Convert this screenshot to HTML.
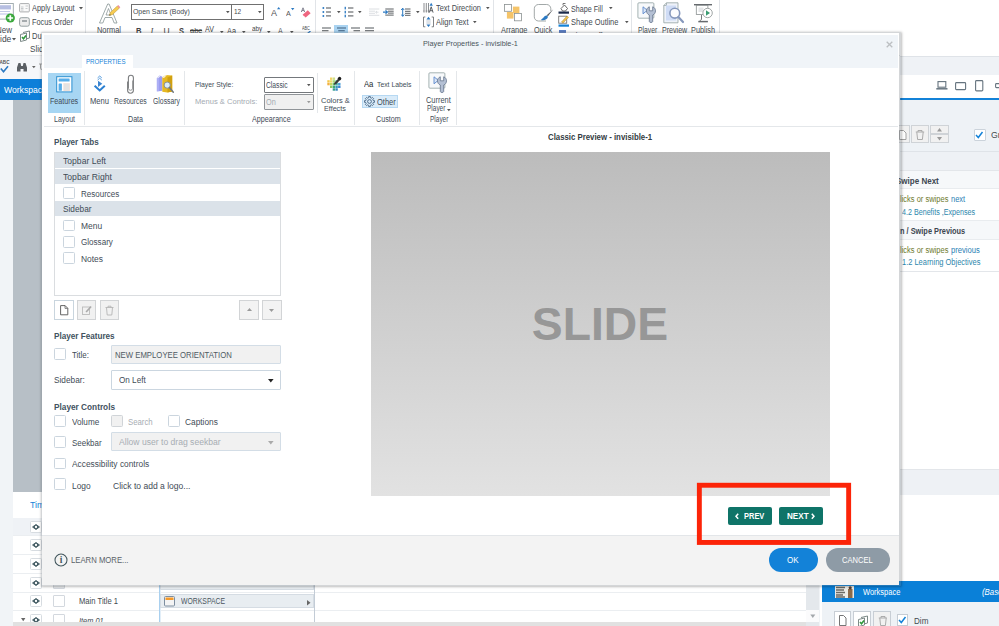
<!DOCTYPE html>
<html><head><meta charset="utf-8"><title>Player Properties</title>
<style>
html,body{margin:0;padding:0;}
body{width:999px;height:626px;overflow:hidden;position:relative;background:#fff;font-family:"Liberation Sans",sans-serif;}
#root{position:absolute;left:0;top:0;width:999px;height:626px;overflow:hidden;}
#root div,#root span,#root svg{position:absolute;box-sizing:border-box;}
.t{white-space:nowrap;line-height:12px;height:12px;}
</style></head><body><div id="root">
<div style="left:0px;top:0px;width:999px;height:56px;background:#fff;"></div>
<div style="left:0px;top:55px;width:900px;height:1px;background:#e3e6ea;"></div>
<div style="left:85px;top:0px;width:1px;height:46px;background:#e1e4e8;"></div>
<div style="left:315px;top:0px;width:1px;height:46px;background:#e1e4e8;"></div>
<div style="left:493px;top:0px;width:1px;height:46px;background:#e1e4e8;"></div>
<div style="left:631px;top:0px;width:1px;height:46px;background:#e1e4e8;"></div>
<div style="left:719px;top:0px;width:1px;height:46px;background:#e1e4e8;"></div>
<svg style="left:-6px;top:0px;" width="24" height="24" viewBox="0 0 24 24"><rect x="0.500" y="3.500" width="18.800" height="15.600" fill="#fff" stroke="#9aa6aa" stroke-width="0.900"/>
<rect x="2" y="5.200" width="15" height="4.200" fill="#b7bfe2"/><rect x="2" y="11" width="14" height="0.800" fill="#b7bfe2"/><rect x="2" y="13" width="14" height="2" fill="#dcdff2"/>
<circle cx="16.300" cy="18" r="4.600" fill="#3aa83c"/><path d="M13.500 18h5.600M16.300 15.200v5.600" stroke="#fff" stroke-width="1.700"/></svg>
<span class="t" style="left:-4px;top:24.0px;font-size:8.6px;color:#444a50;font-weight:400;transform-origin:left center;transform:scaleX(0.93);">New</span>
<span class="t" style="left:-0.5px;top:32.7px;font-size:8.6px;color:#444a50;font-weight:400;transform-origin:left center;transform:scaleX(0.9846);">ide</span>
<svg style="left:12.3px;top:38.2px;" width="4" height="3" viewBox="0 0 4 3"><path d="M0 0h4l-2 2.5z" fill="#555"/></svg>
<svg style="left:19px;top:3px;" width="11" height="10" viewBox="0 0 11 10"><rect x="0.600" y="0.600" width="9.700" height="8.300" rx="0.800" fill="#fafafa" stroke="#a2a4a6" stroke-width="0.900"/><path d="M2 4h2.500M2 5.500h2.500M2 7h2.500M6.500 3h2.500M6.500 5.500h2" stroke="#b0b4b8" stroke-width="0.700"/></svg>
<span class="t" style="left:31.8px;top:2.0px;font-size:8.6px;color:#444a50;font-weight:400;transform-origin:left center;transform:scaleX(0.8587);">Apply Layout</span>
<svg style="left:79px;top:7.2px;" width="4" height="3" viewBox="0 0 4 3"><path d="M0 0h4l-2 2.5z" fill="#555"/></svg>
<svg style="left:19px;top:17px;" width="11" height="10" viewBox="0 0 11 10"><rect x="0.600" y="0.700" width="9.700" height="8.500" rx="1.700" fill="#ededed" stroke="#8b9698" stroke-width="0.900"/><path d="M3 4h5" stroke="#6a7478" stroke-width="1.100"/></svg>
<span class="t" style="left:31.8px;top:16.0px;font-size:8.6px;color:#444a50;font-weight:400;transform-origin:left center;transform:scaleX(0.8558);">Focus Order</span>
<svg style="left:19px;top:30px;" width="12" height="12" viewBox="0 0 12 12"><path d="M1.5 4.5l6-1.5v7l-6 1.5z" fill="#fff" stroke="#7d8a88"/><path d="M4 2.5l6.5-1.5v7l-3 .8" fill="none" stroke="#7d8a88"/><path d="M3 7l1.5 1.8L7 5.5" stroke="#2e9a3a" stroke-width="1.6" fill="none"/></svg>
<span class="t" style="left:31.8px;top:30.0px;font-size:8.6px;color:#444a50;font-weight:400;transform-origin:left center;transform:scaleX(0.8732);">Du</span>
<span class="t" style="left:30px;top:42.5px;font-size:8.6px;color:#444a50;font-weight:400;transform-origin:left center;transform:scaleX(0.9413);">Slid</span>
<svg style="left:98px;top:2px;" width="24" height="23" viewBox="0 0 24 23"><path d="M1.500 21L9.700 2h1.400L19 21h-2.800l-2.200-5.500H7L4.800 21z" fill="#fff" stroke="#7f8d8d" stroke-width="0.750"/>
<path d="M8 13h5l-2.500-6.500z" fill="#fff" stroke="#7f8d8d" stroke-width="0.700"/>
<path d="M11.300 13.500l1-3 7-6.500 2 2.200-7 6.500z" fill="#f6cb52" stroke="#b89536" stroke-width="0.500"/><path d="M19.300 4l1-1 2 2.200-1 1z" fill="#ef8fa0"/><path d="M11.300 13.500l.5-1.500 1 1z" fill="#555"/></svg>
<span class="t" style="left:97.2px;top:24.0px;font-size:8.6px;color:#444a50;font-weight:400;transform-origin:left center;transform:scaleX(0.8659);">Normal</span>
<div style="left:131px;top:4px;width:101px;height:15.5px;background:#fff;border:1px solid #707070;"></div>
<div style="left:231px;top:4px;width:33px;height:15.5px;background:#fff;border:1px solid #707070;"></div>
<span class="t" style="left:132.8px;top:5.8px;font-size:7.9px;color:#444a50;font-weight:400;transform-origin:left center;transform:scaleX(0.8755);">Open Sans (Body)</span>
<span class="t" style="left:234.2px;top:5.8px;font-size:7.9px;color:#444a50;font-weight:400;transform-origin:left center;transform:scaleX(0.8193);">12</span>
<svg style="left:225.5px;top:11px;" width="4" height="3" viewBox="0 0 4 3"><path d="M0 0h3.6l-1.8 2.2z" fill="#555"/></svg>
<svg style="left:258px;top:11px;" width="4" height="3" viewBox="0 0 4 3"><path d="M0 0h3.6l-1.8 2.2z" fill="#555"/></svg>
<span class="t" style="left:270.9px;top:6.6px;font-size:8.6px;color:#555;font-weight:400;transform-origin:left center;transform:scaleX(1.0459);">A</span>
<svg style="left:276.8px;top:7.3px;" width="4" height="3" viewBox="0 0 4 3"><path d="M0 2.300h3.400l-1.700-2.200z" fill="#2b79c2"/></svg>
<span class="t" style="left:285.9px;top:7.5px;font-size:6.8px;color:#555;font-weight:400;transform-origin:left center;transform:scaleX(1.0582);">A</span>
<svg style="left:290.7px;top:7.5px;" width="4" height="3" viewBox="0 0 4 3"><path d="M0 0h3.400l-1.700 2.200z" fill="#2b79c2"/></svg>
<svg style="left:300px;top:6px;" width="12" height="12" viewBox="0 0 12 12"><path d="M2.600 8.800l5.200-4.600 2.800 3-5.200 4.600z" fill="#ef6680"/><path d="M3.700 9.900l2.800 3" stroke="#fff" stroke-width="0.600"/><path d="M1.300 6L3 1.800 4.700 6M2 4.600h2" stroke="#667" fill="none" stroke-width="0.800"/></svg>
<span class="t" style="left:136px;top:24.9px;font-size:8.5px;color:#444;font-weight:700;transform-origin:left center;transform:scaleX(0.896);">B</span>
<span class="t" style="left:150.5px;top:24.9px;font-size:8.5px;color:#444;font-weight:400;font-style:italic;font-family:'Liberation Serif',serif;">I</span>
<span class="t" style="left:163.5px;top:24.9px;font-size:8.5px;color:#444;font-weight:400;text-decoration:underline;">U</span>
<span class="t" style="left:178.5px;top:24.9px;font-size:8.5px;color:#444;font-weight:700;transform-origin:left center;transform:scaleX(0.8819);">S</span>
<span class="t" style="left:190px;top:24.9px;font-size:7.5px;color:#444;font-weight:400;text-decoration:line-through;">abc</span>
<span class="t" style="left:204.8px;top:22.9px;font-size:8.5px;color:#444;font-weight:400;transform-origin:left center;transform:scaleX(0.8404);">AV</span>
<span class="t" style="left:227px;top:24.9px;font-size:8.5px;color:#444;font-weight:400;transform-origin:left center;transform:scaleX(0.8656);">Aa</span>
<span class="t" style="left:251.7px;top:22.9px;font-size:7.5px;color:#444;font-weight:400;transform-origin:left center;transform:scaleX(0.8435);">aby</span>
<span class="t" style="left:277.5px;top:24.9px;font-size:8.5px;color:#444;font-weight:400;transform-origin:left center;transform:scaleX(0.8466);">A</span>
<span class="t" style="left:301.5px;top:21.9px;font-size:5.2px;color:#444;font-weight:400;transform-origin:left center;transform:scaleX(0.7295);">ABC</span>
<svg style="left:307px;top:31px;" width="5" height="3" viewBox="0 0 5 3"><path d="M0.500 2.500l3-2.500" stroke="#2b79c2" stroke-width="1.200"/></svg>
<svg style="left:219.5px;top:30.8px;" width="4" height="3" viewBox="0 0 4 3"><path d="M0 0h3.600l-1.800 2.200z" fill="#555"/></svg>
<svg style="left:241.8px;top:30.8px;" width="4" height="3" viewBox="0 0 4 3"><path d="M0 0h3.600l-1.800 2.200z" fill="#555"/></svg>
<svg style="left:267.2px;top:30.8px;" width="4" height="3" viewBox="0 0 4 3"><path d="M0 0h3.600l-1.800 2.200z" fill="#555"/></svg>
<svg style="left:289.6px;top:30.8px;" width="4" height="3" viewBox="0 0 4 3"><path d="M0 0h3.600l-1.800 2.200z" fill="#555"/></svg>
<svg style="left:322px;top:6px;" width="14" height="12" viewBox="0 0 14 12"><rect x="0.400" y="1.1" width="1.900" height="1.900" rx="0.900" fill="#2b79c2"/><path d="M4 2h5" stroke="#5a5e62" stroke-width="1.100"/><rect x="0.400" y="5.1" width="1.900" height="1.900" rx="0.900" fill="#2b79c2"/><path d="M4 6h5" stroke="#5a5e62" stroke-width="1.100"/><rect x="0.400" y="9.0" width="1.900" height="1.900" rx="0.900" fill="#2b79c2"/><path d="M4 9.9h5" stroke="#5a5e62" stroke-width="1.100"/></svg>
<svg style="left:344px;top:6px;" width="14" height="12" viewBox="0 0 14 12"><rect x="0.600" y="0.8" width="1.300" height="2.600" fill="#2b79c2"/><path d="M4 2h5.400" stroke="#5a5e62" stroke-width="1.100"/><rect x="0.600" y="4.8" width="1.300" height="2.600" fill="#2b79c2"/><path d="M4 6h5.400" stroke="#5a5e62" stroke-width="1.100"/><rect x="0.600" y="8.700000000000001" width="1.300" height="2.600" fill="#2b79c2"/><path d="M4 9.9h5.400" stroke="#5a5e62" stroke-width="1.100"/></svg>
<svg style="left:369px;top:8.2px;" width="14" height="12" viewBox="0 0 14 12"><path d="M0 1h10.3" stroke="#d3d7db" stroke-width="0.800"/><path d="M0 3.2h6" stroke="#d3d7db" stroke-width="0.800"/><path d="M0 5.3h6" stroke="#d3d7db" stroke-width="0.800"/><path d="M0 7.3h10.3" stroke="#d3d7db" stroke-width="0.800"/><path d="M9.500 4.200l-2.500 0M8 3l-1.500 1.200L8 5.500" stroke="#d3d7db" stroke-width="0.800" fill="none"/></svg>
<svg style="left:383px;top:8.2px;" width="14" height="12" viewBox="0 0 14 12"><path d="M2.3 1h8.4" stroke="#5a5e62" stroke-width="1"/><path d="M5 3.2h5.7" stroke="#5a5e62" stroke-width="1"/><path d="M5 5.1h5.7" stroke="#5a5e62" stroke-width="1"/><path d="M2.3 7.1h8.4" stroke="#5a5e62" stroke-width="1"/><path d="M0 4.100h4M2.500 2.300l2 1.800-2 1.800" stroke="#2b79c2" stroke-width="1.100" fill="none"/></svg>
<svg style="left:401.3px;top:8.2px;" width="14" height="12" viewBox="0 0 14 12"><path d="M4 1h5.500" stroke="#5a5e62" stroke-width="1"/><path d="M4 3.3h5.500" stroke="#5a5e62" stroke-width="1"/><path d="M4 5.3h5.500" stroke="#5a5e62" stroke-width="1"/><path d="M4 7.3h5.500" stroke="#5a5e62" stroke-width="1"/><path d="M1.700 0.300v8M0.200 2l1.500-1.800L3.200 2M0.200 6.500l1.500 1.800 1.500-1.800" stroke="#2b79c2" stroke-width="1" fill="none"/></svg>
<svg style="left:336.6px;top:11.2px;" width="4" height="3" viewBox="0 0 4 3"><path d="M0 0h3.600l-1.800 2.200z" fill="#555"/></svg>
<svg style="left:358.3px;top:11.2px;" width="4" height="3" viewBox="0 0 4 3"><path d="M0 0h3.600l-1.800 2.200z" fill="#555"/></svg>
<svg style="left:415.7px;top:11.2px;" width="4" height="3" viewBox="0 0 4 3"><path d="M0 0h3.600l-1.800 2.200z" fill="#555"/></svg>
<div style="left:334.2px;top:24.6px;width:13.8px;height:9px;background:#a9d3f1;"></div>
<svg style="left:322.2px;top:27.3px;" width="10" height="7" viewBox="0 0 10 7"><path d="M0 1.0h9" stroke="#62666a" stroke-width="1.100"/><path d="M0 3.7h6.5" stroke="#62666a" stroke-width="1.100"/></svg>
<svg style="left:336.6px;top:27.3px;" width="10" height="7" viewBox="0 0 10 7"><path d="M0.0 1.0h9" stroke="#4a6a88" stroke-width="1.100"/><path d="M1.25 3.7h6.5" stroke="#4a6a88" stroke-width="1.100"/></svg>
<svg style="left:351px;top:27.3px;" width="10" height="7" viewBox="0 0 10 7"><path d="M0 1.0h9" stroke="#62666a" stroke-width="1.100"/><path d="M2.5 3.7h6.5" stroke="#62666a" stroke-width="1.100"/></svg>
<svg style="left:364.8px;top:27.3px;" width="10" height="7" viewBox="0 0 10 7"><path d="M0 1.0h9" stroke="#62666a" stroke-width="1.100"/><path d="M0 3.7h9" stroke="#62666a" stroke-width="1.100"/></svg>
<svg style="left:423px;top:2px;" width="12" height="12" viewBox="0 0 12 12"><path d="M1 1v9.600M3.300 1v9.600M5.500 1v9.600" stroke="#4e5256" stroke-width="0.650"/><path d="M0.300 9h6" stroke="#4e5256" stroke-width="0.500" stroke-dasharray="0.700 0.700"/><path d="M6.300 10.600l1.900-5.800 1.900 5.800M7 8.700h2.400" stroke="#4a4e52" stroke-width="0.900" fill="none"/><path d="M6.500 3.800l1.700-3 1.700 3z" fill="#2b79c2"/></svg>
<span class="t" style="left:435.7px;top:2.0px;font-size:8.6px;color:#444a50;font-weight:400;transform-origin:left center;transform:scaleX(0.8619);">Text Direction</span>
<svg style="left:485.8px;top:7.2px;" width="4" height="3" viewBox="0 0 4 3"><path d="M0 0h3.6l-1.8 2.2z" fill="#555"/></svg>
<svg style="left:423px;top:16px;" width="12" height="12" viewBox="0 0 12 12"><path d="M2.300 1H0.500v9.800h1.800M8.700 1h1.800v9.800H8.700" stroke="#5e6266" fill="none" stroke-width="0.800"/><rect x="3.300" y="3.800" width="4.400" height="4.200" fill="#dfe3e8"/><path d="M5.500 0.800l2 2.600h-4zM5.500 11l2-2.600h-4z" fill="#2b79c2"/></svg>
<span class="t" style="left:435.7px;top:16.0px;font-size:8.6px;color:#444a50;font-weight:400;transform-origin:left center;transform:scaleX(0.8753);">Align Text</span>
<svg style="left:472.6px;top:21.2px;" width="4" height="3" viewBox="0 0 4 3"><path d="M0 0h3.6l-1.8 2.2z" fill="#555"/></svg>
<svg style="left:503px;top:3px;" width="20" height="19" viewBox="0 0 20 19"><rect x="9.900" y="3.600" width="6.500" height="6.500" fill="#f5c469"/><rect x="3.900" y="9" width="6.600" height="6.600" fill="#f5c469"/><rect x="1.500" y="1.500" width="7" height="6.800" fill="#fff" stroke="#8b9191" stroke-width="0.800"/><rect x="11.400" y="10.500" width="7" height="7.300" fill="#fff" stroke="#8b9191" stroke-width="0.800"/></svg>
<span class="t" style="left:500.8px;top:24.0px;font-size:8.6px;color:#444a50;font-weight:400;transform-origin:left center;transform:scaleX(0.8628);">Arrange</span>
<svg style="left:533px;top:3px;" width="22" height="21" viewBox="0 0 22 21"><path d="M13 18H5.500a4.200 4.200 0 0 1-4.200-4.200V5.700A4.200 4.200 0 0 1 5.500 1.500h8.100a4.200 4.200 0 0 1 4.200 4.200V8" fill="#fff" stroke="#8a9292" stroke-width="0.800"/><path d="M20.300 6.300l-5.300 7-1.300-1z" fill="#5a5e62"/><path d="M13.800 12.600c-2.600-.3-3.300 3-6 4.300 3 1 6.700-.3 7.200-3.200z" fill="#2b79c2"/></svg>
<span class="t" style="left:533.7px;top:24.0px;font-size:8.6px;color:#444a50;font-weight:400;transform-origin:left center;transform:scaleX(0.8325);">Quick</span>
<svg style="left:558px;top:2px;" width="12" height="12" viewBox="0 0 12 12"><path d="M3 6.500l3.500-3.500 3 3.500-2 2.500H4.500z" fill="#fff" stroke="#555" stroke-width="0.9"/><path d="M5 3.200V1.500h2.500" fill="none" stroke="#555" stroke-width="0.8"/><rect x="0.500" y="9.500" width="10.500" height="2.200" fill="#1a2a4a"/></svg>
<span class="t" style="left:571.2px;top:2.6px;font-size:8.6px;color:#444a50;font-weight:400;transform-origin:left center;transform:scaleX(0.8315);">Shape Fill</span>
<svg style="left:608.5px;top:7px;" width="4" height="3" viewBox="0 0 4 3"><path d="M0 0h3.6l-1.8 2.2z" fill="#555"/></svg>
<svg style="left:558px;top:15px;" width="12" height="12" viewBox="0 0 12 12"><rect x="0.700" y="1.200" width="8" height="7" fill="#fff" stroke="#777" stroke-width="0.9"/><path d="M3.500 7l5.500-6 1.500 1.300L5 8z" fill="#f2c34e" stroke="#a98425" stroke-width="0.500"/><rect x="0.500" y="9.500" width="10.500" height="2.200" fill="#1382d8"/></svg>
<span class="t" style="left:571.2px;top:15.8px;font-size:8.6px;color:#444a50;font-weight:400;transform-origin:left center;transform:scaleX(0.8696);">Shape Outline</span>
<svg style="left:624.5px;top:21px;" width="4" height="3" viewBox="0 0 4 3"><path d="M0 0h3.6l-1.8 2.2z" fill="#555"/></svg>
<div style="left:559px;top:29.5px;width:7px;height:3px;background:#5d7fc4;"></div>
<span class="t" style="left:571.2px;top:29.5px;font-size:8.6px;color:#444a50;font-weight:400;transform-origin:left center;transform:scaleX(0.8311);">Shape Effect</span>
<svg style="left:637px;top:1.8px;" width="22" height="22" viewBox="0 0 22 22"><rect x="0.900" y="0.800" width="16" height="15.400" rx="1" fill="#f7f9fb" stroke="#8fa0a0" stroke-width="0.800"/><path d="M6 4.800l4.300 3.500L6 11.800z" fill="#dbe6f6" stroke="#5b88cc" stroke-width="0.900"/><path d="M12.300 4.800v4h3.400v-4c1.900.8 2.800 2.300 2.800 4 0 2-1.100 3.500-2.800 4.200v6.500c0 1.300-3.400 1.300-3.400 0v-6.500c-1.700-.7-2.800-2.200-2.800-4.200 0-1.700.9-3.200 2.800-4z" fill="#b4c0d4" stroke="#64748c" stroke-width="0.800"/></svg>
<span class="t" style="left:637.8px;top:24.0px;font-size:8.6px;color:#444a50;font-weight:400;transform-origin:left center;transform:scaleX(0.7876);">Player</span>
<svg style="left:663px;top:2px;" width="22" height="22" viewBox="0 0 22 22"><path d="M3.500 0.800H15v20H0.800V3.500z" fill="#eef2f9" stroke="#93a2a2" stroke-width="0.800"/><path d="M3.500 0.800V3.500H0.800" fill="none" stroke="#93a2a2" stroke-width="0.700"/><rect x="3" y="3.500" width="10" height="15" fill="#cfdcf5"/><circle cx="11.800" cy="11.200" r="4.900" fill="#fbfcfe" stroke="#8698bc" stroke-width="1.600"/><path d="M15.400 15l4.600 5" stroke="#8698bc" stroke-width="2.200" stroke-linecap="round"/></svg>
<span class="t" style="left:661.8px;top:24.0px;font-size:8.6px;color:#444a50;font-weight:400;transform-origin:left center;transform:scaleX(0.8238);">Preview</span>
<svg style="left:693px;top:2px;" width="22" height="22" viewBox="0 0 22 22"><rect x="1" y="2" width="18" height="1.400" fill="#666a6e"/><rect x="3.300" y="3.400" width="11.600" height="9" fill="#fff" stroke="#8a9090" stroke-width="0.800"/><rect x="5.500" y="5.500" width="5" height="4.500" fill="#e4e6e8"/><path d="M8.500 13v4.500l-2 1.500" stroke="#666a6e" stroke-width="0.900" fill="none"/><path d="M5.300 19.600h9.600" stroke="#666a6e" stroke-width="1.500"/><circle cx="14.600" cy="11" r="4.700" fill="#fff" stroke="#8a9090" stroke-width="0.800"/><path d="M13 8.300l4 2.700-4 2.700z" fill="#3a9c72"/></svg>
<span class="t" style="left:691.4px;top:24.0px;font-size:8.6px;color:#444a50;font-weight:400;transform-origin:left center;transform:scaleX(0.8508);">Publish</span>
<div style="left:0px;top:56px;width:60px;height:23px;background:#f5f7fa;"></div>
<span class="t" style="left:-0.5px;top:57.0px;font-size:4.6px;color:#555;font-weight:700;">ABC</span>
<svg style="left:0px;top:64.5px;" width="10" height="8" viewBox="0 0 10 8"><path d="M0.800 3.500l2.700 3.200L8 1.300" stroke="#2b79c2" stroke-width="1.600" fill="none"/></svg>
<svg style="left:15.5px;top:61.5px;" width="12" height="11" viewBox="0 0 12 11"><path d="M1 9.500V5.500l1.500-4.500h2l.7 3h1.600l.7-3h2l1.500 4.500v4H7.500V7H4.500v2.500z" fill="#5a5f64"/></svg>
<svg style="left:31.5px;top:65.5px;" width="5" height="3" viewBox="0 0 5 3"><path d="M0 0h3.600l-1.800 2.300z" fill="#666"/></svg>
<svg style="left:39px;top:63px;" width="4" height="8" viewBox="0 0 4 8"><path d="M0 1h3M1.500 1v4l1 2" stroke="#999" stroke-width="0.900" fill="none"/></svg>
<div style="left:0px;top:79px;width:60px;height:21px;background:#0d7fd9;"></div>
<span class="t" style="left:3.6px;top:83.6px;font-size:8.8px;color:#fff;font-weight:400;transform-origin:left center;transform:scaleX(0.9782);">Workspace</span>
<div style="left:0px;top:100px;width:13px;height:526px;background:#f1f4f7;"></div>
<div style="left:13px;top:100px;width:40px;height:392px;background:#b7bfc6;"></div>
<div style="left:13px;top:492px;width:800px;height:134px;background:#fff;"></div>
<span class="t" style="left:30.3px;top:499.3px;font-size:8.8px;color:#1382d8;font-weight:400;transform-origin:left center;transform:scaleX(1.0082);">Timeline</span>
<div style="left:13px;top:518px;width:800px;height:17px;background:#eff2f6;"></div>
<div style="left:13px;top:535px;width:800px;height:1px;background:#ebeef1;"></div>
<div style="left:13px;top:554.3px;width:800px;height:1px;background:#ebeef1;"></div>
<div style="left:13px;top:573.3px;width:800px;height:1px;background:#ebeef1;"></div>
<div style="left:13px;top:592px;width:800px;height:1px;background:#ebeef1;"></div>
<div style="left:13px;top:610.3px;width:800px;height:1px;background:#ebeef1;"></div>
<svg style="left:30px;top:520.5px;" width="12" height="12" viewBox="0 0 12 12"><rect x="0.500" y="0.500" width="11" height="11" rx="1" fill="#fff" stroke="#d3d8de" stroke-width="0.900"/><path d="M2.500 6L6 3.400 9.500 6 6 8.600z" fill="#3f5860" stroke="#3f5860" stroke-width="0.800" stroke-linejoin="round"/><circle cx="6" cy="6" r="1.150" fill="#fff"/></svg>
<svg style="left:30px;top:539px;" width="12" height="12" viewBox="0 0 12 12"><rect x="0.500" y="0.500" width="11" height="11" rx="1" fill="#fff" stroke="#d3d8de" stroke-width="0.900"/><path d="M2.500 6L6 3.400 9.500 6 6 8.600z" fill="#3f5860" stroke="#3f5860" stroke-width="0.800" stroke-linejoin="round"/><circle cx="6" cy="6" r="1.150" fill="#fff"/></svg>
<svg style="left:30px;top:558px;" width="12" height="12" viewBox="0 0 12 12"><rect x="0.500" y="0.500" width="11" height="11" rx="1" fill="#fff" stroke="#d3d8de" stroke-width="0.900"/><path d="M2.500 6L6 3.400 9.500 6 6 8.600z" fill="#3f5860" stroke="#3f5860" stroke-width="0.800" stroke-linejoin="round"/><circle cx="6" cy="6" r="1.150" fill="#fff"/></svg>
<svg style="left:30px;top:577px;" width="12" height="12" viewBox="0 0 12 12"><rect x="0.500" y="0.500" width="11" height="11" rx="1" fill="#fff" stroke="#d3d8de" stroke-width="0.900"/><path d="M2.500 6L6 3.400 9.500 6 6 8.600z" fill="#3f5860" stroke="#3f5860" stroke-width="0.800" stroke-linejoin="round"/><circle cx="6" cy="6" r="1.150" fill="#fff"/></svg>
<svg style="left:30px;top:595.3px;" width="12" height="12" viewBox="0 0 12 12"><rect x="0.500" y="0.500" width="11" height="11" rx="1" fill="#fff" stroke="#d3d8de" stroke-width="0.900"/><path d="M2.500 6L6 3.400 9.500 6 6 8.600z" fill="#3f5860" stroke="#3f5860" stroke-width="0.800" stroke-linejoin="round"/><circle cx="6" cy="6" r="1.150" fill="#fff"/></svg>
<svg style="left:30px;top:614px;" width="12" height="12" viewBox="0 0 12 12"><rect x="0.500" y="0.500" width="11" height="11" rx="1" fill="#fff" stroke="#d3d8de" stroke-width="0.900"/><path d="M2.500 6L6 3.400 9.500 6 6 8.600z" fill="#3f5860" stroke="#3f5860" stroke-width="0.800" stroke-linejoin="round"/><circle cx="6" cy="6" r="1.150" fill="#fff"/></svg>
<div style="left:53px;top:577px;width:11.6px;height:11.6px;background:#e6e9ec;border:1px solid #d3d8de;border-radius:1px;"></div>
<div style="left:53px;top:595.3px;width:11.6px;height:11.6px;background:#fff;border:1px solid #d3d8de;border-radius:1px;"></div>
<div style="left:53px;top:614px;width:11.6px;height:11.6px;background:#fff;border:1px solid #d3d8de;border-radius:1px;"></div>
<span class="t" style="left:79px;top:595.4px;font-size:8.3px;color:#444a50;font-weight:400;transform-origin:left center;transform:scaleX(0.9189);">Main Title 1</span>
<span class="t" style="left:79px;top:614.5px;font-size:8.3px;color:#444a50;font-weight:400;transform-origin:left center;transform:scaleX(0.8887);font-style:italic;">Item 01</span>
<svg style="left:21px;top:618px;" width="5" height="4" viewBox="0 0 5 4"><path d="M0 0h4.400l-2.200 3.200z" fill="#666"/></svg>
<div style="left:159px;top:535px;width:1px;height:91px;background:#a9d0ef;"></div>
<div style="left:160px;top:535px;width:1px;height:91px;background:#e2eef8;"></div>
<div style="left:314px;top:535px;width:1px;height:91px;background:#c3ccd6;"></div>
<div style="left:160px;top:574px;width:153.5px;height:15.5px;background:#e8edf1;border:1px solid #d5dce3;"></div>
<div style="left:160px;top:594.3px;width:153.5px;height:14.2px;background:#e8edf1;border:1px solid #d5dce3;"></div>
<svg style="left:164px;top:596px;" width="11" height="11" viewBox="0 0 11 11"><rect x="0.500" y="0.500" width="10" height="9.500" rx="1" fill="#f4f4f4" stroke="#7d8ea0"/><rect x="1.500" y="1.500" width="8" height="2.500" fill="#f59a2a"/></svg>
<span class="t" style="left:181px;top:595.2px;font-size:8.3px;color:#4a5660;font-weight:400;transform-origin:left center;transform:scaleX(0.8267);">WORKSPACE</span>
<svg style="left:307px;top:599.5px;" width="4" height="6" viewBox="0 0 4 6"><path d="M0 0l3.500 2.700L0 5.400z" fill="#666"/></svg>
<div style="left:805.5px;top:535px;width:13px;height:91px;background:#e4e8ec;"></div>
<div style="left:805.5px;top:610px;width:13px;height:11.5px;background:#fbfbfc;"></div>
<svg style="left:809.5px;top:613.5px;" width="6" height="5" viewBox="0 0 6 5"><path d="M0.300 0.500h5l-2.500 3.600z" fill="#a4a8ac"/></svg>
<div style="left:818.5px;top:495px;width:3.5px;height:131px;background:#f0f3f6;"></div>
<div style="left:13px;top:622.3px;width:793px;height:4px;background:#e1e1e1;"></div>
<div style="left:820px;top:56px;width:179px;height:570px;background:#fff;"></div>
<div style="left:900px;top:56px;width:99px;height:1px;background:#dfe3e8;"></div>
<div style="left:900px;top:57px;width:99px;height:18px;background:#eff2f6;"></div>
<div style="left:900px;top:75px;width:99px;height:23px;background:#fff;"></div>
<div style="left:900px;top:98px;width:99px;height:2px;background:#1382d8;"></div>
<div style="left:900px;top:100px;width:99px;height:51px;background:#eef2f6;"></div>
<svg style="left:935.5px;top:81.3px;" width="13" height="10" viewBox="0 0 13 10"><rect x="2" y="0.600" width="7.800" height="5.600" fill="none" stroke="#66747f" stroke-width="1.100"/><path d="M0.300 7.800h11.200" stroke="#66747f" stroke-width="1.500"/></svg>
<svg style="left:955.3px;top:81.5px;" width="12" height="10" viewBox="0 0 12 10"><rect x="0.600" y="0.600" width="10" height="7" rx="0.800" fill="none" stroke="#66747f" stroke-width="1.100"/></svg>
<svg style="left:975.3px;top:79.8px;" width="10" height="13" viewBox="0 0 10 13"><rect x="0.600" y="0.600" width="7.200" height="10.300" rx="0.900" fill="none" stroke="#66747f" stroke-width="1.100"/></svg>
<svg style="left:994.5px;top:82.5px;" width="8" height="6" viewBox="0 0 8 6"><rect x="0.600" y="0.600" width="8" height="4" rx="0.800" fill="none" stroke="#66747f" stroke-width="1.100"/></svg>
<div style="left:893px;top:125.3px;width:17px;height:18px;background:#f1f1f1;border:1px solid #cfd3d7;"></div>
<div style="left:911.2px;top:125.3px;width:17.6px;height:18px;background:#f1f1f1;border:1px solid #cfd3d7;"></div>
<div style="left:930.3px;top:125.3px;width:18.6px;height:9.2px;background:#f1f1f1;border:1px solid #cfd3d7;"></div>
<div style="left:930.3px;top:134.3px;width:18.6px;height:9px;background:#f1f1f1;border:1px solid #cfd3d7;"></div>
<svg style="left:898.5px;top:129.5px;" width="8" height="10" viewBox="0 0 8 10"><path d="M0.500 0.500h4l2.500 2.500v6.500h-6.500z" fill="#fff" stroke="#999" stroke-width="0.900"/></svg>
<svg style="left:915.2px;top:128.8px;" width="10" height="12" viewBox="0 0 10 12"><path d="M0.800 3h8.400M3 3V1.500h4V3M1.800 3.200l.8 7.300h4.800l.8-7.300" fill="none" stroke="#a4a4a4" stroke-width="0.900"/></svg>
<svg style="left:937.2px;top:128px;" width="5" height="4" viewBox="0 0 5 4"><path d="M0 3.500h5L2.500 0z" fill="#9a9a9a"/></svg>
<svg style="left:937.2px;top:137.3px;" width="5" height="4" viewBox="0 0 5 4"><path d="M0 0h5L2.500 3.500z" fill="#9a9a9a"/></svg>
<div style="left:973.6px;top:128.5px;width:12px;height:12px;background:#fff;border:1px solid #cbd3db;border-radius:1px;"></div>
<svg style="left:975.3px;top:130.6px;" width="9" height="8" viewBox="0 0 9 8"><path d="M1 4l2.300 2.500L7.500 1" stroke="#1382d8" stroke-width="1.500" fill="none"/></svg>
<span class="t" style="left:990.8px;top:129.0px;font-size:8.4px;color:#444a50;font-weight:400;transform-origin:left center;transform:scaleX(1.0395);">Gr</span>
<div style="left:900px;top:151px;width:99px;height:1px;background:#dfe3e8;"></div>
<div style="left:900px;top:152px;width:99px;height:18px;background:#eef1f5;"></div>
<div style="left:900px;top:170px;width:99px;height:1px;background:#e3e6ea;"></div>
<div style="left:900px;top:171px;width:99px;height:17px;background:#f6f8fa;"></div>
<div style="left:900px;top:188px;width:99px;height:1px;background:#e9ecef;"></div>
<div style="left:900px;top:220px;width:99px;height:1px;background:#e9ecef;"></div>
<div style="left:900px;top:221px;width:99px;height:18px;background:#f6f8fa;"></div>
<div style="left:900px;top:239px;width:99px;height:1px;background:#e9ecef;"></div>
<div style="left:900px;top:271px;width:99px;height:1px;background:#e3e6ea;"></div>
<span class="t" style="left:896px;top:174.8px;font-size:8.4px;color:#3c4650;font-weight:700;transform-origin:left center;transform:scaleX(0.9573);">Swipe Next</span>
<span class="t" style="left:899.9px;top:192.7px;font-size:8.3px;color:#6d7a2c;font-weight:400;transform-origin:left center;transform:scaleX(0.9047);">licks or swipes</span>
<span class="t" style="left:950.9px;top:192.7px;font-size:8.3px;color:#2a80b4;font-weight:400;transform-origin:left center;transform:scaleX(0.8988);">next</span>
<span class="t" style="left:902.4px;top:205.9px;font-size:8.3px;color:#2c86ac;font-weight:400;transform-origin:left center;transform:scaleX(0.861);">4.2 Benefits ,Expenses</span>
<span class="t" style="left:899.9px;top:225.3px;font-size:8.4px;color:#3c4650;font-weight:700;transform-origin:left center;transform:scaleX(0.8811);">n / Swipe Previous</span>
<span class="t" style="left:899.9px;top:243.7px;font-size:8.3px;color:#6d7a2c;font-weight:400;transform-origin:left center;transform:scaleX(0.9047);">licks or swipes</span>
<span class="t" style="left:950.9px;top:243.7px;font-size:8.3px;color:#2a80b4;font-weight:400;transform-origin:left center;transform:scaleX(0.918);">previous</span>
<span class="t" style="left:902.4px;top:256.2px;font-size:8.3px;color:#2c86ac;font-weight:400;transform-origin:left center;transform:scaleX(0.899);">1.2 Learning Objectives</span>
<div style="left:900px;top:469px;width:99px;height:1px;background:#e3e6ea;"></div>
<div style="left:900px;top:470px;width:99px;height:25px;background:#eef1f5;"></div>
<div style="left:822px;top:581px;width:177px;height:20.8px;background:#0a80d8;"></div>
<svg style="left:834.5px;top:586px;" width="19" height="12" viewBox="0 0 19 12"><rect x="0" y="0" width="19" height="12" fill="#ecebe6"/><path d="M1 1.500h9M1 4h8M1 6.500h9M1 9h7M1 11h9" stroke="#6a6a64" stroke-width="1.300"/><rect x="13" y="3" width="4.500" height="9" fill="#8a6a4a"/><circle cx="15.200" cy="1.800" r="1.600" fill="#5a4030"/></svg>
<span class="t" style="left:862.8px;top:585.7px;font-size:8.5px;color:#fff;font-weight:400;transform-origin:left center;transform:scaleX(0.8806);">Workspace</span>
<span class="t" style="left:981.6px;top:586.0px;font-size:8.5px;color:#fff;font-weight:400;transform-origin:left center;transform:scaleX(0.9187);font-style:italic;">(Base</span>
<div style="left:822px;top:602px;width:177px;height:24px;background:#eef2f6;"></div>
<div style="left:833.7px;top:610.8px;width:17px;height:18px;background:#fff;border:1px solid #c8ced5;"></div>
<div style="left:853.3px;top:610.8px;width:17.3px;height:18px;background:#fff;border:1px solid #c8ced5;"></div>
<div style="left:873px;top:610.8px;width:17.5px;height:18px;background:#f1f1f1;border:1px solid #c8ced5;"></div>
<svg style="left:838.5px;top:615px;" width="8" height="11" viewBox="0 0 8 11"><path d="M0.500 0.500h4l2.500 2.500v7.500h-6.500z" fill="#fff" stroke="#666" stroke-width="0.900"/></svg>
<svg style="left:856.5px;top:614.5px;" width="12" height="12" viewBox="0 0 12 12"><path d="M1.500 4.500l6-1.500v7l-6 1.500z" fill="#fff" stroke="#7d8a88"/><path d="M4 2.500l6.500-1.500v7l-3 .8" fill="none" stroke="#7d8a88"/><path d="M3 7l1.500 1.800L7 5.500" stroke="#2e9a3a" stroke-width="1.600" fill="none"/></svg>
<svg style="left:877.5px;top:615px;" width="9" height="11" viewBox="0 0 9 11"><path d="M0.800 3h8.400M3 3V1.500h4V3M1.800 3.200l.8 7.300h4.800l.8-7.300" fill="none" stroke="#a4a4a4" stroke-width="0.900"/></svg>
<div style="left:896.6px;top:614px;width:11.8px;height:11.8px;background:#fff;border:1px solid #c5ccd4;"></div>
<svg style="left:898.3px;top:616px;" width="9" height="8" viewBox="0 0 9 8"><path d="M1 4l2.300 2.500L7.500 1" stroke="#1382d8" stroke-width="1.500" fill="none"/></svg>
<span class="t" style="left:913.7px;top:615.2px;font-size:8.3px;color:#444a50;font-weight:400;transform-origin:left center;transform:scaleX(0.9761);">Dim</span>
<div style="left:40.700px;top:32px;width:860px;height:554.200px;background:rgba(96,104,112,0.270);border-radius:1px;box-shadow:0.800px 0.800px 2.500px 0 rgba(0,0,0,0.260);"></div>
<div style="left:41.900px;top:33.400px;width:857.500px;height:551.600px;background:#fff;"></div>
<div style="left:43.5px;top:35.2px;width:854.6px;height:33.3px;background:#f0f4f8;"></div>
<span class="t" style="left:422.5px;top:38.3px;font-size:7.9px;color:#4a545c;font-weight:400;transform-origin:left center;transform:scaleX(0.9246);">Player Properties - invisible-1</span>
<svg style="left:885.8px;top:41.2px;" width="8" height="8" viewBox="0 0 8 8"><path d="M0.700 0.700l5.600 5.600M6.300 0.700l-5.600 5.600" stroke="#bcbfc2" stroke-width="1.300"/></svg>
<div style="left:82px;top:55px;width:51px;height:14.5px;background:#fff;"></div>
<span class="t" style="left:86.3px;top:55.5px;font-size:7.8px;color:#1382d8;font-weight:400;transform-origin:left center;transform:scaleX(0.7878);">PROPERTIES</span>
<div style="left:42px;top:68.5px;width:857.4px;height:57.5px;background:#fff;"></div>
<div style="left:43.5px;top:126px;width:854.6px;height:1px;background:#e4e7ea;"></div>
<div style="left:84px;top:71px;width:1px;height:54px;background:#e4e7ea;"></div>
<div style="left:184px;top:71px;width:1px;height:54px;background:#e4e7ea;"></div>
<div style="left:354px;top:71px;width:1px;height:54px;background:#e4e7ea;"></div>
<div style="left:419px;top:71px;width:1px;height:54px;background:#e4e7ea;"></div>
<div style="left:456px;top:71px;width:1px;height:54px;background:#e4e7ea;"></div>
<div style="left:317px;top:73px;width:1px;height:40px;background:#e4e7ea;"></div>
<div style="left:48px;top:72.5px;width:33px;height:40.5px;background:#a7d6f3;"></div>
<svg style="left:56px;top:76px;" width="17" height="17" viewBox="0 0 17 17"><rect x="0.700" y="0.700" width="15.200" height="15.200" fill="#fff" stroke="#2b8fd0" stroke-width="1"/><rect x="2.600" y="2.400" width="11" height="3.200" rx="0.500" fill="#56aeea"/><rect x="2.600" y="7.600" width="3.300" height="7.200" rx="0.500" fill="#56aeea"/><rect x="7.800" y="7.600" width="5.800" height="7.200" fill="#e3e3e3" stroke="#f0d8cc" stroke-width="0.500"/></svg>
<span class="t" style="left:49.8px;top:95.0px;font-size:8.3px;color:#3f4c57;font-weight:400;transform-origin:left center;transform:scaleX(0.8609);">Features</span>
<span class="t" style="left:53.7px;top:112.9px;font-size:8.3px;color:#3f4c57;font-weight:400;transform-origin:left center;transform:scaleX(0.8427);">Layout</span>
<svg style="left:92px;top:74px;" width="15" height="18" viewBox="0 0 15 18"><path d="M5.600 3.900l2.100-1.900 2.100 1.900M5.600 6.100l2.100-1.900 2.100 1.900" fill="none" stroke="#5a9fe0" stroke-width="1"/><path d="M6 6.800l4.300 3-4.300 3.200z" fill="#3d86d0"/><path d="M2.600 11.700l5.100 4.800 5.100-4.800" fill="none" stroke="#2b80d2" stroke-width="2"/></svg>
<span class="t" style="left:90px;top:95.0px;font-size:8.3px;color:#3f4c57;font-weight:400;transform-origin:left center;transform:scaleX(0.9199);">Menu</span>
<svg style="left:126px;top:74px;" width="10" height="21" viewBox="0 0 10 21"><path d="M1.600 7.500v8.800a2.900 2.900 0 0 0 5.800 0V3.700a2.500 2.500 0 0 0-5 0v10.500" fill="none" stroke="#7c7e80" stroke-width="1.100"/><path d="M2.400 14.200a2 2 0 0 0 4.200 0V6.500" fill="none" stroke="#8c8e90" stroke-width="0.900"/></svg>
<span class="t" style="left:114.4px;top:95.0px;font-size:8.3px;color:#3f4c57;font-weight:400;transform-origin:left center;transform:scaleX(0.8242);">Resources</span>
<svg style="left:156px;top:74px;" width="19" height="20" viewBox="0 0 19 20"><path d="M0.800 4l2.800-2.600 2.800 1.300v14L0.800 17.500z" fill="#9b9df0"/><path d="M0.800 4l2.800-2.600 1 .5L2 4.600z" fill="#e8e8fa"/><path d="M2 4.600v12.600" stroke="#c2c4fa" stroke-width="0.900"/><path d="M6.300 3.500l3.500-2.500 6.400.5v16l-5 1-4.900-.8z" fill="#e6b822"/><path d="M6.300 3.500l3.500-2.500 1 .2L8 4z" fill="#fbf3d8"/><path d="M11.500 3.500l4.700-2v16l-4.700 1z" fill="#d0a010"/><circle cx="11.200" cy="11.100" r="3.100" fill="#dcecf8" stroke="#7e8890" stroke-width="0.900"/><path d="M13.500 13.600l3.800 4.600" stroke="#70787e" stroke-width="1.500" stroke-linecap="round"/></svg>
<span class="t" style="left:152.7px;top:95.0px;font-size:8.3px;color:#3f4c57;font-weight:400;transform-origin:left center;transform:scaleX(0.8245);">Glossary</span>
<span class="t" style="left:127.9px;top:112.9px;font-size:8.3px;color:#3f4c57;font-weight:400;transform-origin:left center;transform:scaleX(0.8556);">Data</span>
<span class="t" style="left:194.5px;top:79.0px;font-size:8px;color:#3f4c57;font-weight:400;transform-origin:left center;transform:scaleX(0.8529);">Player Style:</span>
<span class="t" style="left:194.5px;top:95.8px;font-size:8px;color:#a4abb2;font-weight:400;transform-origin:left center;transform:scaleX(0.9467);">Menus &amp; Controls:</span>
<div style="left:264px;top:77px;width:50px;height:15.5px;background:#fff;border:1px solid #74787c;border-radius:1px;"></div>
<span class="t" style="left:266.2px;top:79.0px;font-size:8.4px;color:#3f4c57;font-weight:400;transform-origin:left center;transform:scaleX(0.8053);">Classic</span>
<svg style="left:307.4px;top:84px;" width="4" height="3" viewBox="0 0 4 3"><path d="M0 0h3.600l-1.800 2.200z" fill="#555"/></svg>
<div style="left:264px;top:94px;width:50px;height:15.5px;background:#f0f0f0;border:1px solid #909498;border-radius:1px;"></div>
<span class="t" style="left:266.2px;top:95.8px;font-size:8.4px;color:#a4abb2;font-weight:400;transform-origin:left center;transform:scaleX(0.8746);">On</span>
<svg style="left:307.4px;top:100.8px;" width="4" height="3" viewBox="0 0 4 3"><path d="M0 0h3.600l-1.800 2.200z" fill="#999"/></svg>
<span class="t" style="left:251.6px;top:112.9px;font-size:8.3px;color:#3f4c57;font-weight:400;transform-origin:left center;transform:scaleX(0.8645);">Appearance</span>
<svg style="left:327px;top:75.5px;" width="15" height="16" viewBox="0 0 15 16"><rect x="3.00" y="1.50" width="2.400" height="2.400" fill="#f2d468"/><rect x="5.70" y="1.50" width="2.400" height="2.400" fill="#cfe08a"/><rect x="0.30" y="4.20" width="2.400" height="2.400" fill="#f6c84a"/><rect x="3.00" y="4.20" width="2.400" height="2.400" fill="#f0dc6a"/><rect x="5.70" y="4.20" width="2.400" height="2.400" fill="#a8d87a"/><rect x="8.40" y="4.20" width="2.400" height="2.400" fill="#6cc8a0"/><rect x="0.30" y="6.90" width="2.400" height="2.400" fill="#f2b040"/><rect x="3.00" y="6.90" width="2.400" height="2.400" fill="#c8d860"/><rect x="5.70" y="6.90" width="2.400" height="2.400" fill="#6cc070"/><rect x="8.40" y="6.90" width="2.400" height="2.400" fill="#48b8a8"/><rect x="11.10" y="6.90" width="2.400" height="2.400" fill="#48a0d8"/><rect x="3.00" y="9.60" width="2.400" height="2.400" fill="#8cc860"/><rect x="5.70" y="9.60" width="2.400" height="2.400" fill="#40a878"/><rect x="8.40" y="9.60" width="2.400" height="2.400" fill="#3898b8"/><rect x="11.10" y="9.60" width="2.400" height="2.400" fill="#3c84d0"/><rect x="5.70" y="12.30" width="2.400" height="2.400" fill="#38a090"/><rect x="8.40" y="12.30" width="2.400" height="2.400" fill="#3488c0"/><path d="M6.800 8.800l0.600-2 4.200-4.500 1.700 1.500-4.200 4.500z" fill="#3a3a3a"/><path d="M11.300 1.500a1.600 1.600 0 0 1 2.600 2.200l-1 .9-2.400-2.200z" fill="#1e1e1e"/></svg>
<span class="t" style="left:320.7px;top:95.3px;font-size:7.7px;color:#3f4c57;font-weight:400;transform-origin:left center;transform:scaleX(0.9754);">Colors &amp;</span>
<span class="t" style="left:324px;top:103.3px;font-size:7.7px;color:#3f4c57;font-weight:400;transform-origin:left center;transform:scaleX(0.9317);">Effects</span>
<span class="t" style="left:364.2px;top:78.2px;font-size:9.6px;color:#24282c;font-weight:400;transform-origin:left center;transform:scaleX(0.8005);">Aa</span>
<span class="t" style="left:376.6px;top:79.0px;font-size:8px;color:#3f4c57;font-weight:400;transform-origin:left center;transform:scaleX(0.8525);">Text Labels</span>
<div style="left:362px;top:95.3px;width:36px;height:12.7px;background:#d9ebf9;border:1px solid #b6d8f2;"></div>
<svg style="left:363.5px;top:95.7px;" width="11" height="11" viewBox="0 0 11 11"><path d="M10.43 4.64L10.43 6.36L9.29 6.41L8.83 7.54L9.59 8.38L8.38 9.59L7.54 8.83L6.41 9.29L6.36 10.43L4.64 10.43L4.59 9.29L3.46 8.83L2.62 9.59L1.41 8.38L2.17 7.54L1.71 6.41L0.57 6.36L0.57 4.64L1.71 4.59L2.17 3.46L1.41 2.62L2.62 1.41L3.46 2.17L4.59 1.71L4.64 0.57L6.36 0.57L6.41 1.71L7.54 2.17L8.38 1.41L9.59 2.62L8.83 3.46L9.29 4.59z" fill="none" stroke="#3d5c7c" stroke-width="0.850" stroke-linejoin="round"/><circle cx="5.500" cy="5.500" r="1.900" fill="none" stroke="#3d5c7c" stroke-width="0.850"/></svg>
<span class="t" style="left:376.6px;top:95.8px;font-size:8.3px;color:#3f4c57;font-weight:400;transform-origin:left center;transform:scaleX(0.9008);">Other</span>
<span class="t" style="left:375.8px;top:112.9px;font-size:8.3px;color:#3f4c57;font-weight:400;transform-origin:left center;transform:scaleX(0.8672);">Custom</span>
<svg style="left:428px;top:72px;" width="22" height="22" viewBox="0 0 22 22"><rect x="0.900" y="0.800" width="16" height="15.400" rx="1" fill="#f7f9fb" stroke="#8fa0a0" stroke-width="0.800"/><path d="M6 4.800l4.300 3.500L6 11.800z" fill="#dbe6f6" stroke="#5b88cc" stroke-width="0.900"/><path d="M12.300 4.800v4h3.400v-4c1.900.8 2.800 2.300 2.800 4 0 2-1.100 3.500-2.800 4.200v6.500c0 1.300-3.400 1.300-3.400 0v-6.500c-1.700-.7-2.800-2.200-2.800-4.200 0-1.700.9-3.200 2.800-4z" fill="#b4c0d4" stroke="#64748c" stroke-width="0.800"/></svg>
<span class="t" style="left:426.1px;top:94.0px;font-size:8.3px;color:#3f4c57;font-weight:400;transform-origin:left center;transform:scaleX(0.896);">Current</span>
<span class="t" style="left:426.9px;top:102.4px;font-size:8.3px;color:#3f4c57;font-weight:400;transform-origin:left center;transform:scaleX(0.7821);">Player</span>
<svg style="left:447.3px;top:108.5px;" width="4" height="3" viewBox="0 0 4 3"><path d="M0 0h3.600l-1.800 2.200z" fill="#555"/></svg>
<span class="t" style="left:429.9px;top:112.9px;font-size:8.3px;color:#3f4c57;font-weight:400;transform-origin:left center;transform:scaleX(0.7821);">Player</span>
<span class="t" style="left:54.1px;top:135.7px;font-size:8.6px;color:#425260;font-weight:600;transform-origin:left center;transform:scaleX(0.9403);">Player Tabs</span>
<div style="left:54px;top:152px;width:227px;height:144.3px;background:#fff;border:1px solid #dadde0;"></div>
<div style="left:55px;top:152.5px;width:225px;height:15.5px;background:#dbe2e9;"></div>
<span class="t" style="left:63px;top:154.75px;font-size:8.3px;color:#3f4c57;font-weight:400;transform-origin:left center;transform:scaleX(1.0354);">Topbar Left</span>
<div style="left:55px;top:169px;width:225px;height:15.3px;background:#dbe2e9;"></div>
<span class="t" style="left:63px;top:171.15px;font-size:8.3px;color:#3f4c57;font-weight:400;transform-origin:left center;transform:scaleX(1.0412);">Topbar Right</span>
<div style="left:55px;top:201.3px;width:225px;height:15.2px;background:#dbe2e9;"></div>
<span class="t" style="left:63px;top:203.4px;font-size:8.3px;color:#3f4c57;font-weight:400;transform-origin:left center;transform:scaleX(0.9962);">Sidebar</span>
<div style="left:63.2px;top:187.39999999999998px;width:11.8px;height:11.8px;background:#fff;border:1px solid #cbd5de;border-radius:1.500px;"></div>
<span class="t" style="left:80.7px;top:187.7px;font-size:8.3px;color:#3f4c57;font-weight:400;transform-origin:left center;transform:scaleX(0.9654);">Resources</span>
<div style="left:63.2px;top:219.7px;width:11.8px;height:11.8px;background:#fff;border:1px solid #cbd5de;border-radius:1.500px;"></div>
<span class="t" style="left:80.7px;top:220.0px;font-size:8.3px;color:#3f4c57;font-weight:400;transform-origin:left center;transform:scaleX(1.0162);">Menu</span>
<div style="left:63.2px;top:235.89999999999998px;width:11.8px;height:11.8px;background:#fff;border:1px solid #cbd5de;border-radius:1.500px;"></div>
<span class="t" style="left:80.7px;top:236.2px;font-size:8.3px;color:#3f4c57;font-weight:400;transform-origin:left center;transform:scaleX(0.9741);">Glossary</span>
<div style="left:63.2px;top:252.3px;width:11.8px;height:11.8px;background:#fff;border:1px solid #cbd5de;border-radius:1.500px;"></div>
<span class="t" style="left:80.7px;top:252.6px;font-size:8.3px;color:#3f4c57;font-weight:400;transform-origin:left center;transform:scaleX(1.0146);">Notes</span>
<div style="left:54px;top:300px;width:20px;height:20px;background:#fff;border:1px solid #c9d5de;"></div>
<div style="left:77.2px;top:300px;width:19.3px;height:20px;background:#f1f1f1;border:1px solid #d2d4d6;"></div>
<div style="left:99.8px;top:300px;width:19.3px;height:20px;background:#f1f1f1;border:1px solid #d2d4d6;"></div>
<div style="left:239px;top:300px;width:20px;height:20px;background:#f3f3f3;border:1px solid #d2d4d6;"></div>
<div style="left:261.5px;top:300px;width:20px;height:20px;background:#f3f3f3;border:1px solid #d2d4d6;"></div>
<svg style="left:60px;top:305px;" width="9" height="11" viewBox="0 0 9 11"><path d="M0.600 0.600h4.500l2.700 2.700v6.500H0.600z" fill="#fff" stroke="#555" stroke-width="0.900"/><path d="M5 0.600v2.800h2.800" fill="none" stroke="#555" stroke-width="0.700"/></svg>
<svg style="left:82px;top:304.5px;" width="11" height="11" viewBox="0 0 11 11"><rect x="0.500" y="2" width="7" height="7.500" fill="none" stroke="#bbb" stroke-width="0.900"/><path d="M3.500 6.500l5-5.500 1.200 1-5 5.500z" fill="#aaa"/></svg>
<svg style="left:105px;top:304.5px;" width="9" height="11" viewBox="0 0 9 11"><path d="M0.500 2.500h8M3 2.500V1.200h3v1.300M1.500 2.500l.7 7.500h4.600l.7-7.500" fill="none" stroke="#b5b5b5" stroke-width="0.900"/></svg>
<svg style="left:246.5px;top:308px;" width="5" height="4" viewBox="0 0 5 4"><path d="M0 3h5L2.500 0z" fill="#9a9a9a"/></svg>
<svg style="left:269px;top:308.5px;" width="5" height="4" viewBox="0 0 5 4"><path d="M0 0h5L2.500 3z" fill="#9a9a9a"/></svg>
<span class="t" style="left:54.1px;top:329.9px;font-size:8.6px;color:#425260;font-weight:600;transform-origin:left center;transform:scaleX(0.9475);">Player Features</span>
<div style="left:54.2px;top:348.2px;width:11.8px;height:11.8px;background:#fff;border:1px solid #cbd5de;border-radius:1.500px;"></div>
<span class="t" style="left:71.7px;top:349.0px;font-size:8.3px;color:#3f4c57;font-weight:400;transform-origin:left center;transform:scaleX(0.9616);">Title:</span>
<div style="left:110.5px;top:345.2px;width:170.5px;height:19.3px;background:#f1f1f1;border:1px solid #d3dde6;border-radius:1px;"></div>
<span class="t" style="left:114.8px;top:349.1px;font-size:8.5px;color:#4f5a63;font-weight:400;transform-origin:left center;transform:scaleX(0.9122);">NEW EMPLOYEE ORIENTATION</span>
<span class="t" style="left:54.1px;top:374.2px;font-size:8.3px;color:#3f4c57;font-weight:400;transform-origin:left center;transform:scaleX(0.9963);">Sidebar:</span>
<div style="left:110.5px;top:370.4px;width:170.5px;height:19.4px;background:#fff;border:1px solid #cbd6e0;border-radius:1px;"></div>
<span class="t" style="left:119.4px;top:374.2px;font-size:8.3px;color:#3f4c57;font-weight:400;transform-origin:left center;transform:scaleX(0.9808);">On Left</span>
<svg style="left:267.8px;top:379.2px;" width="6" height="4" viewBox="0 0 6 4"><path d="M0 0h5.600l-2.800 3.400z" fill="#222"/></svg>
<span class="t" style="left:54.1px;top:400.5px;font-size:8.6px;color:#425260;font-weight:600;transform-origin:left center;transform:scaleX(0.9612);">Player Controls</span>
<div style="left:54.2px;top:415px;width:11.8px;height:11.8px;background:#fff;border:1px solid #cbd5de;border-radius:1.500px;"></div>
<span class="t" style="left:71.5px;top:415.7px;font-size:8.3px;color:#3f4c57;font-weight:400;transform-origin:left center;transform:scaleX(0.9861);">Volume</span>
<div style="left:111.2px;top:415px;width:11.8px;height:11.8px;background:#f1f1f1;border:1px solid #d0d4d8;border-radius:1.500px;"></div>
<span class="t" style="left:128.2px;top:415.7px;font-size:8.3px;color:#a7adb3;font-weight:400;transform-origin:left center;transform:scaleX(0.9392);">Search</span>
<div style="left:168.3px;top:415px;width:11.8px;height:11.8px;background:#fff;border:1px solid #cbd5de;border-radius:1.500px;"></div>
<span class="t" style="left:185.2px;top:415.7px;font-size:8.3px;color:#3f4c57;font-weight:400;transform-origin:left center;transform:scaleX(1.0043);">Captions</span>
<div style="left:54.2px;top:436.1px;width:11.8px;height:11.8px;background:#fff;border:1px solid #cbd5de;border-radius:1.500px;"></div>
<span class="t" style="left:71.5px;top:436.9px;font-size:8.3px;color:#3f4c57;font-weight:400;transform-origin:left center;transform:scaleX(0.9574);">Seekbar</span>
<div style="left:110.5px;top:432.1px;width:170.5px;height:19.4px;background:#f1f1f1;border:1px solid #d3dde6;border-radius:1px;"></div>
<span class="t" style="left:119.4px;top:435.9px;font-size:8.3px;color:#a7adb3;font-weight:400;transform-origin:left center;transform:scaleX(1.0349);">Allow user to drag seekbar</span>
<svg style="left:267.8px;top:440.8px;" width="6" height="4" viewBox="0 0 6 4"><path d="M0 0h5.600l-2.800 3.400z" fill="#aaa"/></svg>
<div style="left:54.2px;top:457.5px;width:11.8px;height:11.8px;background:#fff;border:1px solid #cbd5de;border-radius:1.500px;"></div>
<span class="t" style="left:71.5px;top:458.3px;font-size:8.3px;color:#3f4c57;font-weight:400;transform-origin:left center;transform:scaleX(1.0082);">Accessibility controls</span>
<div style="left:54.2px;top:478.3px;width:11.8px;height:11.8px;background:#fff;border:1px solid #cbd5de;border-radius:1.500px;"></div>
<span class="t" style="left:71.6px;top:479.5px;font-size:8.3px;color:#3f4c57;font-weight:400;transform-origin:left center;transform:scaleX(1.0127);">Logo</span>
<span class="t" style="left:112.8px;top:480.0px;font-size:8.3px;color:#3f4c57;font-weight:400;transform-origin:left center;transform:scaleX(1.0305);">Click to add a logo...</span>
<span class="t" style="left:547.8px;top:131.3px;font-size:8.6px;color:#333b42;font-weight:600;transform-origin:left center;transform:scaleX(0.9083);">Classic Preview - invisible-1</span>
<div style="left:371px;top:152px;width:459px;height:344.2px;background:linear-gradient(#bcbcbc,#e2e2e2);"></div>
<span class="t" style="left:600px;top:296px;height:56px;line-height:56px;font-size:46.300px;font-weight:700;color:#979797;transform:translateX(-50%);">SLIDE</span>
<div style="left:727.8px;top:507px;width:43.8px;height:18px;background:#0f7468;border-radius:2px;"></div>
<div style="left:779.3px;top:507px;width:44.2px;height:18px;background:#0f7468;border-radius:2px;"></div>
<span class="t" style="left:743.6px;top:510.0px;font-size:8.4px;color:#fff;font-weight:700;transform-origin:left center;transform:scaleX(0.8918);">PREV</span>
<span class="t" style="left:787.1px;top:510.0px;font-size:8.4px;color:#fff;font-weight:700;transform-origin:left center;transform:scaleX(0.9686);">NEXT</span>
<svg style="left:735.2px;top:512.7px;" width="5" height="7" viewBox="0 0 5 7"><path d="M3.200 0.800L1 3.300l2.200 2.500" stroke="#fff" stroke-width="1.500" fill="none"/></svg>
<svg style="left:810.7px;top:512.7px;" width="5" height="7" viewBox="0 0 5 7"><path d="M0.800 0.800L3 3.300 0.800 5.800" stroke="#fff" stroke-width="1.500" fill="none"/></svg>
<div style="left:42px;top:534.5px;width:857.4px;height:50.2px;background:#f3f3f3;border-top:1px solid #e3e6e9;"></div>
<svg style="left:54.2px;top:552.5px;" width="14" height="14" viewBox="0 0 14 14"><circle cx="7" cy="7" r="6" fill="none" stroke="#42565c" stroke-width="1.050"/></svg>
<span class="t" style="left:61.2px;top:553.6px;font-size:9.5px;color:#42565c;font-weight:700;transform:translateX(-50%);font-family:'Liberation Serif',serif;">i</span>
<span class="t" style="left:70.8px;top:553.8px;font-size:8.3px;color:#5a6268;font-weight:400;transform-origin:left center;transform:scaleX(0.9304);">LEARN MORE...</span>
<div style="left:769px;top:547.5px;width:49px;height:24px;background:#1382d8;border-radius:12px;"></div>
<span class="t" style="left:786.7px;top:553.7px;font-size:8.6px;color:#fff;font-weight:400;transform-origin:left center;transform:scaleX(0.9336);">OK</span>
<div style="left:826px;top:547.5px;width:64px;height:24px;background:#8e9ba6;border-radius:12px;"></div>
<span class="t" style="left:841.8px;top:553.7px;font-size:8.6px;color:#fff;font-weight:400;transform-origin:left center;transform:scaleX(0.8799);">CANCEL</span>
<svg style="left:690px;top:478px;" width="170" height="72" viewBox="0 0 170 72"><rect x="9.350" y="7.250" width="149.300" height="57.200" fill="none" stroke="#fc2408" stroke-width="4.900"/></svg>
</div></body></html>
